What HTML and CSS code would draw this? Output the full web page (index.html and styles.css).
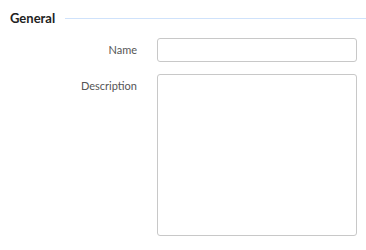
FILE: index.html
```html
<!DOCTYPE html>
<html lang="en">
<head>
    <meta charset="UTF-8">
    <title>General</title>
    <link rel="stylesheet" href="styles.css">
</head>
<body>
    <div class="section">
        <div class="section-title">
            <span>General</span>
            <div class="section-line"></div>
        </div>

        <div class="field">
            <label for="name">Name</label>
            <input type="text" id="name">
        </div>

        <div class="field">
            <label for="description">Description</label>
            <textarea id="description"></textarea>
        </div>
    </div>
</body>
</html>
```

FILE: styles.css
```css
body {
    margin: 0;
    font-family: 'Lato', sans-serif;
    background: #fff;
    color: #333;
}

.section {
    padding: 10px 9px 0 10px;
}

.section-title {
    display: flex;
    align-items: center;
    gap: 10px;
    font-size: 13px;
    font-weight: 700;
    color: #222;
    height: 16px;
    margin-bottom: 12px;
}

.section-line {
    flex: 1;
    height: 1px;
    background: #cfe2fb;
    margin-right: -9px;
}

.field {
    display: grid;
    grid-template-columns: 127px 200px;
    column-gap: 20px;
    margin-bottom: 12px;
}

.field label {
    text-align: right;
    font-size: 11px;
    color: #555;
    line-height: 24px;
}

.field input,
.field textarea {
    box-sizing: border-box;
    width: 200px;
    border: 1px solid #c8c8c8;
    border-radius: 3px;
    margin: 0;
    font-family: inherit;
}

.field input {
    height: 24px;
}

.field textarea {
    height: 162px;
    resize: none;
}
```
